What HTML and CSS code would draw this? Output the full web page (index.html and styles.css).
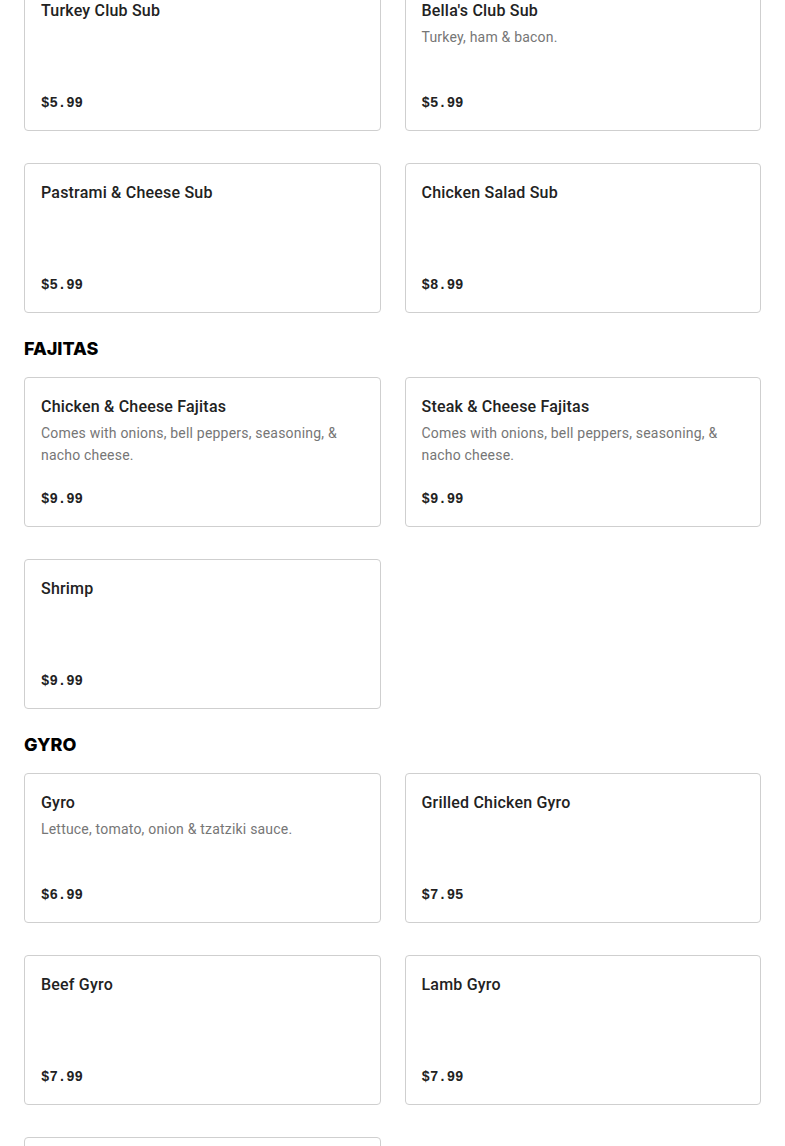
FILE: index.html
```html
<!DOCTYPE html>
<html>
<head>
<meta charset="utf-8">
<link rel="stylesheet" href="styles.css">
</head>
<body>
<main class="menu">
  <div class="grid first">
    <div class="card"><div class="title">Turkey Club Sub</div><div class="price">$5.99</div></div>
    <div class="card"><div class="title">Bella's Club Sub</div><div class="desc">Turkey, ham &amp; bacon.</div><div class="price">$5.99</div></div>
    <div class="card"><div class="title">Pastrami &amp; Cheese Sub</div><div class="price">$5.99</div></div>
    <div class="card"><div class="title">Chicken Salad Sub</div><div class="price">$8.99</div></div>
  </div>
  <h2 class="section">FAJITAS</h2>
  <div class="grid">
    <div class="card"><div class="title">Chicken &amp; Cheese Fajitas</div><div class="desc">Comes with onions, bell peppers, seasoning, &amp; nacho cheese.</div><div class="price">$9.99</div></div>
    <div class="card"><div class="title">Steak &amp; Cheese Fajitas</div><div class="desc">Comes with onions, bell peppers, seasoning, &amp; nacho cheese.</div><div class="price">$9.99</div></div>
    <div class="card"><div class="title">Shrimp</div><div class="price">$9.99</div></div>
  </div>
  <h2 class="section">GYRO</h2>
  <div class="grid">
    <div class="card"><div class="title">Gyro</div><div class="desc">Lettuce, tomato, onion &amp; tzatziki sauce.</div><div class="price">$6.99</div></div>
    <div class="card"><div class="title">Grilled Chicken Gyro</div><div class="price">$7.95</div></div>
    <div class="card"><div class="title">Beef Gyro</div><div class="price">$7.99</div></div>
    <div class="card"><div class="title">Lamb Gyro</div><div class="price">$7.99</div></div>
    <div class="card"></div>
  </div>
</main>
</body>
</html>
```
FILE: styles.css
```css
html, body {
  margin: 0;
  padding: 0;
  background: #fff;
}
body {
  font-family: Roboto, "Liberation Sans", sans-serif;
  color: #222;
}
.menu {
  padding: 0 24px;
}
.grid {
  display: grid;
  grid-template-columns: 1fr 1fr;
  column-gap: 24px;
  row-gap: 32px;
}
.grid.first {
  margin-top: -19px;
}
.card {
  box-sizing: border-box;
  min-height: 150px;
  border: 1px solid #cfcfcf;
  border-radius: 4px;
  padding: 16px;
  display: flex;
  flex-direction: column;
}
.title {
  padding-top: 1px;
  font-size: 16px;
  font-weight: 500;
  line-height: 24px;
  letter-spacing: 0.2px;
  color: #222;
  margin-bottom: 3px;
}
.desc {
  font-size: 14px;
  line-height: 22px;
  letter-spacing: 0.2px;
  color: #767676;
}
.price {
  margin-top: auto;
  font-family: "Liberation Mono", monospace;
  font-weight: 700;
  font-size: 14px;
  line-height: 22px;
  color: #222;
}
.section {
  margin: 24px 0 16px;
  font-family: Inter, "Liberation Sans", sans-serif;
  font-size: 18px;
  line-height: 24px;
  font-weight: 800;
  color: #000;
}
```
